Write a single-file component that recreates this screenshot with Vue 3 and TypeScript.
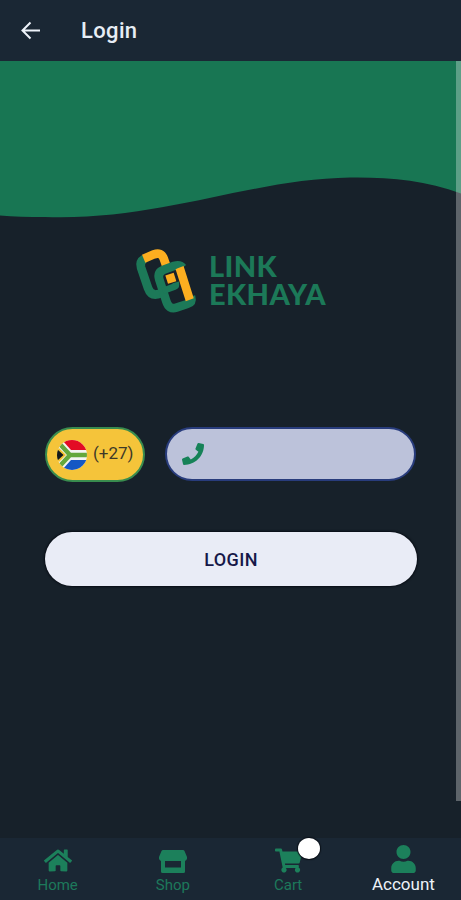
<script setup lang="ts">
import { ref } from 'vue'

interface Tab {
  label: string
  viewBox: string
  path: string
  width: number
  height: number
  badge?: boolean
}

const tabs: Tab[] = [
  {
    label: 'Home', viewBox: '0 0 576 512', width: 28, height: 25,
    path: 'M280.37 148.26L96 300.11V464a16 16 0 0 0 16 16l112.06-.29a16 16 0 0 0 15.92-16V368a16 16 0 0 1 16-16h64a16 16 0 0 1 16 16v95.64a16 16 0 0 0 16 16.05L464 480a16 16 0 0 0 16-16V300L295.67 148.26a12.19 12.19 0 0 0-15.3 0zM571.6 251.47L488 182.56V44.05a12 12 0 0 0-12-12h-56a12 12 0 0 0-12 12v72.61L318.47 43a48 48 0 0 0-61 0L4.34 251.47a12 12 0 0 0-1.6 16.9l25.5 31A12 12 0 0 0 45.15 301l235.22-193.74a12.19 12.19 0 0 1 15.3 0L530.9 301a12 12 0 0 0 16.9-1.6l25.5-31a12 12 0 0 0-1.7-16.93z',
  },
  {
    label: 'Shop', viewBox: '0 0 28 24', width: 28, height: 24,
    path: 'M4 1H24Q25 1 25.5 2L28 8Q28.5 11 26 12H2Q-.5 11 0 8L2.5 2Q3 1 4 1ZM2 12H6V18.5H22V12H26V22.5Q26 24 24.5 24H3.5Q2 24 2 22.5Z',
  },
  {
    label: 'Cart', viewBox: '0 0 576 512', width: 27, height: 25,
    path: 'M528.12 301.319l47.273-208C578.806 78.301 567.391 64 551.99 64H159.208l-9.166-44.81C147.758 8.021 137.93 0 126.529 0H24C10.745 0 0 10.745 0 24v16c0 13.255 10.745 24 24 24h69.883l70.248 343.435C147.325 417.1 136 435.222 136 456c0 30.928 25.072 56 56 56s56-25.072 56-56c0-15.674-6.447-29.835-16.824-40h209.647C430.447 426.165 424 440.326 424 456c0 30.928 25.072 56 56 56s56-25.072 56-56c0-22.172-12.888-41.332-31.579-50.405l5.517-24.276c3.413-15.018-8.002-29.319-23.403-29.319H218.117l-6.545-32h293.145c11.206 0 20.92-7.754 23.403-18.681z',
    badge: true,
  },
  {
    label: 'Account', viewBox: '0 0 448 512', width: 25, height: 28,
    path: 'M224 256c70.7 0 128-57.3 128-128S294.7 0 224 0 96 57.3 96 128s57.3 128 128 128zm89.6 32h-16.7c-22.2 10.2-46.9 16-72.9 16s-50.6-5.8-72.9-16h-16.7C60.2 288 0 348.2 0 422.4V464c0 26.5 21.5 48 48 48h352c26.5 0 48-21.5 48-48v-41.6c0-74.2-60.2-134.4-134.4-134.4z',
  },
]
const active = ref('Account')
const phone = ref('')
</script>

<template>
  <div class="screen">
    <header class="topbar">
      <svg class="back" viewBox="0 0 20 20"><path d="M19 9.5H2M9.5 1.5L1.5 9.5L9.5 17.5" /></svg>
      <h1>Login</h1>
    </header>

    <main class="content">
      <svg class="wave" viewBox="0 0 461 160" preserveAspectRatio="none">
        <path d="M0 0H461V132.5C425 119 388 116 350 116.5C250 118 160 160 45 156Q20 156 0 154.5Z" />
      </svg>

      <div class="brand">
        <svg class="mark" viewBox="0 0 210 228">
          <g fill="none" stroke-width="26">
            <path class="green" d="M43 47Q28 56 33 73L54 135Q62 158 83 154L100 148" />
            <path class="orange" d="M41 47L72 34Q93 26 101 46L109 69" />
            <path class="green" d="M158 74Q150 64 132 69L102 80Q81 88 88 110L109 175Q117 201 139 194L172 183Q188 178 183 160" />
            <path class="orange" d="M146 83L156 79L182 161L172 165Z" fill="#fcae20" stroke-width="15" />
            <path class="orange" d="M110 110L135 102" />
            <path class="green" d="M98 144L133 131Q140 128 137 118" stroke-width="20" />
          </g>
        </svg>
        <div class="brand-name">LINK<br>EKHAYA</div>
      </div>

      <form class="form" @submit.prevent>
        <div class="phone-row">
          <button type="button" class="country">
            <svg class="flag" viewBox="0 0 30 30">
              <clipPath id="flag-clip"><circle cx="15" cy="15" r="15" /></clipPath>
              <g clip-path="url(#flag-clip)">
                <path fill="#f3f5f2" d="M0 0H30V30H0Z" />
                <path fill="#e30b24" d="M5 0H30V10H14Z" />
                <path fill="#1557c4" d="M5 30H30V20H14Z" />
                <path fill="none" stroke="#64a83c" stroke-width="4.5" d="M0 1L13 15L0 29M13 15H30" />
                <path fill="#f2c230" d="M0 6L9 15L0 24Z" />
                <path fill="#11181b" d="M0 9L6.5 15L0 21Z" />
              </g>
            </svg>
            <span>(+27)</span>
          </button>
          <label class="phone">
            <svg viewBox="0 0 512 512"><path d="M493.4 24.6l-104-24c-11.3-2.6-22.9 3.3-27.5 13.9l-48 112c-4.2 9.8-1.4 21.3 6.9 28l60.6 49.6c-36 76.7-98.9 140.5-177.2 177.2l-49.6-60.6c-6.8-8.3-18.2-11.1-28-6.9l-112 48C3.9 366.5-2 378.1.6 389.4l24 104C27.1 504.2 36.7 512 48 512c256.1 0 464-207.5 464-464 0-11.2-7.7-20.9-18.6-23.4z" /></svg>
            <input v-model="phone" type="tel" />
          </label>
        </div>
        <button type="submit" class="submit">LOGIN</button>
      </form>
      <div class="scrollbar"></div>
    </main>

    <nav class="tabs">
      <a v-for="tab in tabs" :key="tab.label" class="tab" :class="{ active: tab.label === active }" @click="active = tab.label">
        <span class="icon">
          <svg :viewBox="tab.viewBox" :width="tab.width" :height="tab.height"><path :d="tab.path" /></svg>
          <i v-if="tab.badge" class="badge"></i>
        </span>
        <span class="label">{{ tab.label }}</span>
      </a>
    </nav>
  </div>
</template>

<style>
body { margin: 0; background: #17212a; }
</style>

<style scoped>
.screen {
  display: flex;
  flex-direction: column;
  height: 900px;
  overflow: hidden;
  background: #17212a;
  font-family: Roboto, sans-serif;
}
.topbar {
  display: flex;
  align-items: center;
  gap: 40px;
  flex: none;
  height: 61px;
  padding-left: 21px;
  box-sizing: border-box;
  background: #1a2734;
}
.back { width: 20px; height: 20px; fill: none; stroke: #eef3fa; stroke-width: 2; }
h1 { margin: 0; font-size: 22px; font-weight: 500; line-height: 26px; letter-spacing: 0.35px; color: #e7edf5; }
.content { position: relative; flex: 1; min-height: 0; }
.wave { display: block; width: 100%; height: 160px; fill: #187653; }
.brand { display: flex; padding: 22px 0 0 130px; height: 76px; }
.mark { width: 70px; height: 76px; flex: none; }
.green { stroke: #1c7958; }
.orange { stroke: #fcae20; }
.brand-name {
  padding: 9px 0 0 9px;
  font-family: Lato, sans-serif;
  font-size: 29px;
  font-weight: 900;
  line-height: 28px;
  letter-spacing: 0.4px;
  color: #1c7958;
}
.form { padding: 108px 44px 0 45px; }
.phone-row { display: flex; gap: 20px; height: 55px; }
.country {
  display: flex;
  align-items: center;
  gap: 6px;
  width: 100px;
  padding: 0 0 0 10px;
  box-sizing: border-box;
  border: 2px solid #398c4e;
  border-radius: 28px;
  background: #f5c43a;
  color: #3d3928;
  font: 17px/22px Roboto, sans-serif;
}
.country span { padding-bottom: 4px; }
.flag { width: 30px; height: 30px; flex: none; }
.phone {
  display: flex;
  align-items: center;
  flex: 1;
  min-width: 0;
  height: 54px;
  margin-right: 1px;
  padding: 0 15px;
  box-sizing: border-box;
  border: 2px solid #283c7c;
  border-radius: 28px;
  background: #bcc2da;
}
.phone svg { width: 22px; height: 22px; flex: none; fill: #168258; }
.phone input { flex: 1; min-width: 0; border: 0; outline: 0; background: transparent; font: 18px Roboto, sans-serif; }
.submit {
  display: block;
  width: 100%;
  height: 54px;
  margin-top: 50px;
  padding: 2px 0 0;
  border: 0;
  border-radius: 28px;
  background: #e9ecf6;
  box-shadow: 0 0 2px 1px #080d15;
  color: #161848;
  font: 500 18px/22px Roboto, sans-serif;
  letter-spacing: 0.4px;
}
.scrollbar { position: absolute; top: 0; right: 0; width: 5px; height: 740px; background: rgba(255, 255, 255, 0.3); }
.tabs { display: flex; flex: none; height: 62px; background: #1a2734; }
.tab { display: flex; flex: 1; flex-direction: column; align-items: center; color: #1d795b; }
.icon { position: relative; display: flex; align-items: flex-end; height: 35px; }
.icon svg { display: block; fill: #1c805b; }
.label { margin-top: 3px; font-size: 15px; line-height: 18px; }
.active .label { margin-top: 2px; font-size: 17px; color: #edf2f8; }
.badge { position: absolute; left: 23px; top: 0; width: 22px; height: 21px; border-radius: 50%; background: #fff; box-shadow: 0 0 1px 1px #0a1018; }
</style>
